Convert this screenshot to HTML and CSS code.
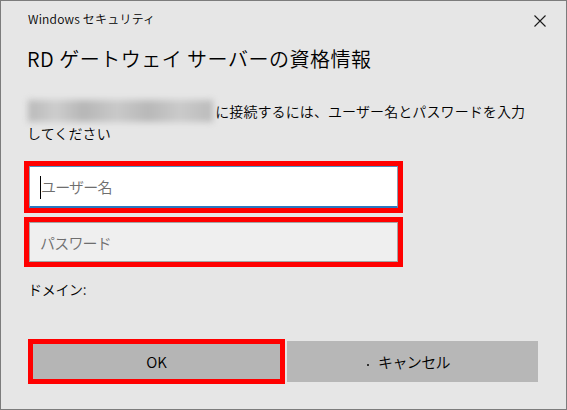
FILE: index.html
```html
<!DOCTYPE html>
<html lang="ja">
<head>
    <meta charset="UTF-8">
    <meta name="viewport" content="width=device-width, initial-scale=1.0">
    <title>Windows セキュリティ</title>
    <link rel="stylesheet" href="styles.css">
</head>
<body>
    <div class="dialog">
        <div class="titlebar">
            <span class="app-name">Windows セキュリティ</span>
            <span class="close">
                <svg width="12" height="12" viewBox="0 0 12 12">
                    <path d="M0.5 0.5 L11.5 11.5 M11.5 0.5 L0.5 11.5" stroke="#1a1a1a" stroke-width="1.1" fill="none"/>
                </svg>
            </span>
        </div>

        <h1 class="heading">RD ゲートウェイ サーバーの資格情報</h1>

        <p class="message"><span class="host"></span> に接続するには、ユーザー名とパスワードを入力<br>してください</p>

        <div class="mark first">
            <div class="field active">
                <span class="caret"></span>
                <span class="placeholder">ユーザー名</span>
            </div>
        </div>
        <div class="mark">
            <div class="field">
                <span class="placeholder">パスワード</span>
            </div>
        </div>

        <div class="domain">ドメイン:</div>

        <div class="buttons">
            <button class="btn ok">OK</button>
            <button class="btn cancel"><span class="dot"></span>キャンセル</button>
        </div>
    </div>
</body>
</html>
```

FILE: styles.css
```css
body {
    margin: 0;
    background: #e6e6e6;
    font-family: "Noto Sans CJK JP", "Noto Sans", sans-serif;
    font-weight: 350;
    color: #000;
}
.dialog {
    width: 567px;
    height: 410px;
    box-sizing: border-box;
    border: 1px solid #7c7c7c;
    background: #e6e6e6;
    padding: 0 26px;
    display: flex;
    flex-direction: column;
}
.titlebar {
    display: flex;
    justify-content: space-between;
    align-items: center;
    height: 34px;
    margin-right: -6px;
}
.app-name {
    font-size: 12px;
    padding-left: 1px;
    letter-spacing: 0.2px;
}
.close {
    display: flex;
    margin-top: 5px;
}
.heading {
    margin: 10px 0 0;
    font-size: 20px;
    font-weight: 350;
    line-height: 28px;
    letter-spacing: 0.5px;
}
.message {
    margin: 27px 0 0;
    font-size: 14px;
    line-height: 22px;
    letter-spacing: 0.1px;
}
.host {
    display: inline-block;
    vertical-align: top;
    width: 185px;
    height: 22px;
    margin-left: 1px;
    margin-right: -1px;
    background: linear-gradient(90deg, #b9b9b9 0%, #cdcdcd 15%, #b6b6b6 30%, #c9c9c9 48%, #b8b8b8 65%, #cacaca 82%, #bbbbbb 100%);
    filter: blur(3px);
}
.mark {
    border: 5px solid #ff0000;
    width: 369px;
    margin-left: -3px;
    margin-top: 4px;
}
.mark.first {
    margin-top: 17px;
}
.field {
    height: 40px;
    box-sizing: border-box;
    background: #efefef;
    border: 1px solid #a5a5a5;
    display: flex;
    align-items: center;
    padding-left: 10px;
}
.field.active {
    height: 42px;
    background: #ffffff;
    border: 1px solid #8a9fb3;
    border-top-color: #4f8fc3;
    border-bottom: 2px solid #2a78c0;
}
.caret {
    width: 1px;
    height: 23px;
    background: #000;
    margin-top: 2px;
}
.placeholder {
    font-size: 15px;
    color: #6e6e6e;
    letter-spacing: -0.8px;
}
.domain {
    margin-top: 11px;
    font-size: 14px;
    line-height: 22px;
    letter-spacing: -0.3px;
    padding-left: 1px;
}
.buttons {
    margin-top: auto;
    margin-bottom: 25px;
    display: flex;
    align-items: center;
    gap: 2px;
}
.btn {
    font-family: inherit;
    font-weight: 350;
    font-size: 15px;
    color: #000;
    background: #b7b7b7;
    border: none;
    padding: 0;
    cursor: pointer;
}
.ok {
    width: 257px;
    height: 45px;
    margin-left: 1px;
    border: 5px solid #ff0000;
    background: #b5b5b5;
}
.cancel {
    width: 251px;
    height: 41px;
    display: flex;
    justify-content: center;
    align-items: center;
    padding-right: 8px;
    letter-spacing: -0.6px;
}
.dot {
    width: 2px;
    height: 2px;
    background: #333;
    margin: 6px 9px 0 0;
}
```
